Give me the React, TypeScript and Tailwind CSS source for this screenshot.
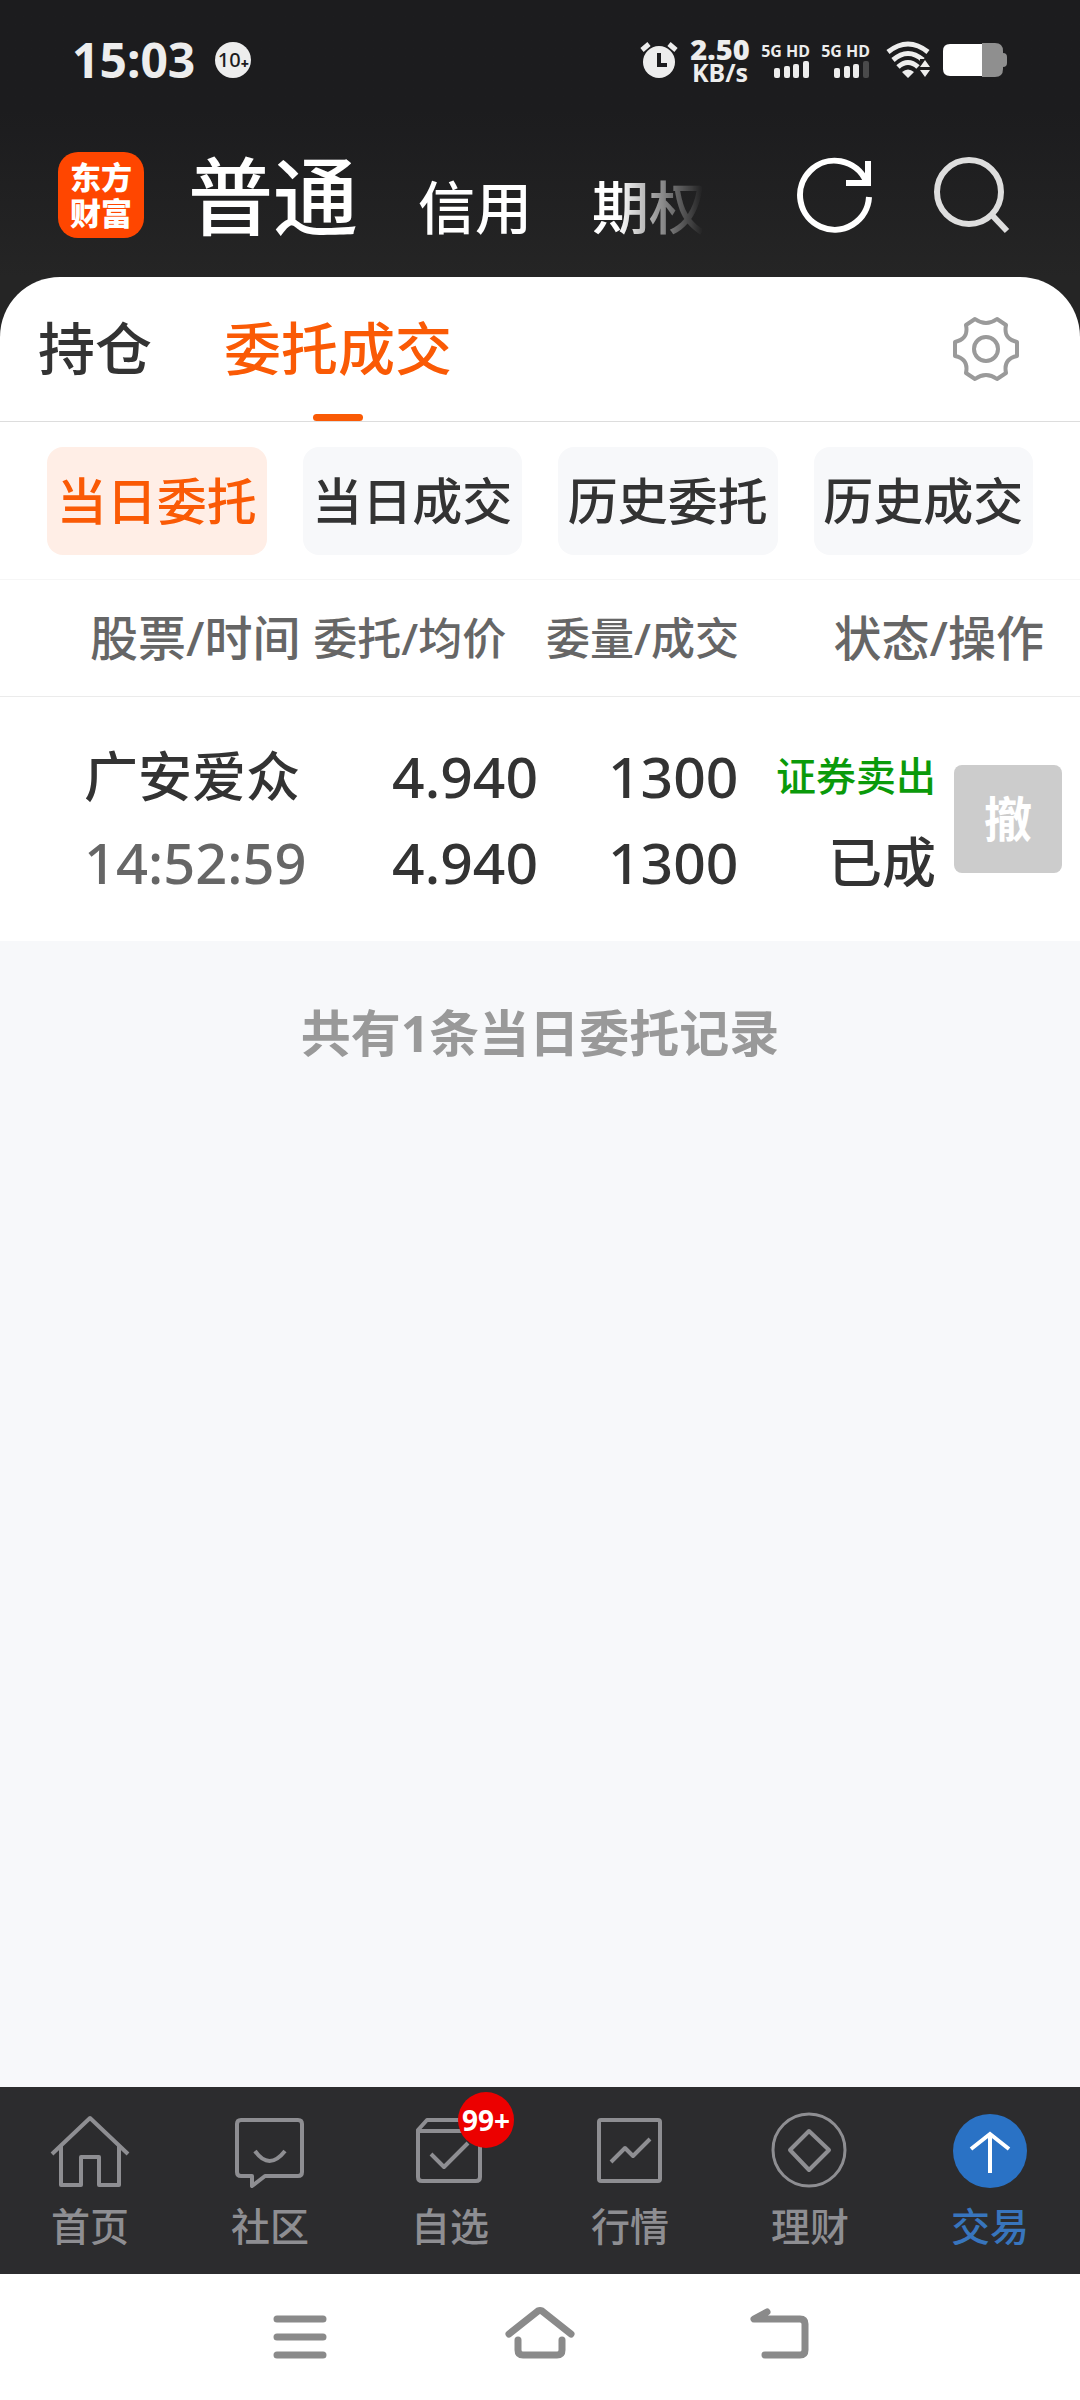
import React from "react";

const CJK = "font-['Noto_Sans','Noto_Sans_CJK_SC',sans-serif]";

function StatusBar() {
  return (
    <div className="flex h-30 items-center px-18 text-[#ededed]">
      <span className="text-5xl leading-none font-bold">15:03</span>
      <span className="ml-5 flex h-9 w-9 items-center justify-center rounded-full bg-[#ededed] text-xl leading-none font-medium text-[#1c1c1e]">
        10
        <span className="mt-2 text-sm leading-none font-black">+</span>
      </span>
      <div className="ml-auto flex items-center">
        <svg width="38" height="38" viewBox="0 0 38 38" aria-label="闹钟">
          <circle cx="19" cy="21" r="16" fill="#ededed" />
          <path d="M2 9 9 3M29 3l7 6" stroke="#ededed" strokeWidth="5" />
          <path d="M19 12v12h8" stroke="#1c1c1e" strokeWidth="4" fill="none" />
        </svg>
        <span className="ml-3 w-15 text-center text-[25px] leading-[22px] font-bold">
          <b className="text-[29px]">2.50</b>
          <br />
          KB/s
        </span>
        <Signal last="#ededed" />
        <Signal last="#4a4a4b" />
        <svg className="ml-4" width="44" height="38" viewBox="0 0 44 38" aria-label="无线网络">
          <g fill="none" stroke="#ededed" strokeWidth="5">
            <path d="M2 11Q22-5 42 11" />
            <path d="M7 19Q22 6 37 19" />
            <path d="M12 26Q22 17 32 26" />
          </g>
          <path d="M34 18h10v20H34z" fill="#1c1c1e" />
          <path d="M16 31q6-5 12 0l-6 6zM39 19l5 7H34zM34 29h10l-5 7z" fill="#ededed" />
        </svg>
        <svg className="ml-3" width="66" height="34" viewBox="0 0 66 34" aria-label="电量">
          <path d="M40 0h13q8 0 8 8v2q4 0 4 4v6q0 4-4 4v2q0 8-8 8H40z" fill="#8f8f8f" />
          <path d="M40 1v32H8q-7 0-7-7V8q0-7 7-7z" fill="#fff" />
        </svg>
      </div>
    </div>
  );
}

function Signal({ last }: { last: string }) {
  return (
    <div className="ml-3 flex w-12 flex-col items-end">
      <span className="text-base leading-4 font-bold whitespace-nowrap">5G HD</span>
      <svg className="mt-0.5" width="36" height="17" viewBox="0 0 36 17">
        <rect x="0" y="7" width="6" height="10" rx="2" fill="#ededed" />
        <rect x="10" y="5" width="6" height="12" rx="2" fill="#ededed" />
        <rect x="19" y="3" width="6" height="14" rx="2" fill="#ededed" />
        <rect x="29" y="0" width="6" height="17" rx="2" fill={last} />
      </svg>
    </div>
  );
}

function Header() {
  return (
    <header className="flex h-[157px] items-start pl-[58px] text-white">
      <div className="mt-8 flex h-[86px] w-[86px] items-center justify-center rounded-[20px] bg-[#ff4600] text-center text-[31px] leading-9 font-black">
        <span>
          东方
          <br />
          财富
        </span>
      </div>
      <nav className="ml-11 flex h-full flex-1 items-baseline gap-15 overflow-hidden mask-[linear-gradient(to_right,#000_430px,transparent_515px)] pt-5 font-medium whitespace-nowrap">
        <button className="text-[85px] leading-28">普通</button>
        <button className="text-[57px]">信用</button>
        <button className="text-[57px]">期权</button>
      </nav>
      <button className="mt-9" aria-label="刷新">
        <svg width="80" height="80" viewBox="0 0 80 80" fill="none" stroke="#fff" strokeWidth="6">
          <path d="M73 41A34.5 34.5 0 1 1 70 25" />
          <path d="M50 27h22V5" />
        </svg>
      </button>
      <button className="mt-9 mr-17 ml-14" aria-label="搜索">
        <svg width="80" height="80" viewBox="0 0 80 80" fill="none" stroke="#dedede" strokeWidth="6">
          <circle cx="37" cy="36" r="32" />
          <path d="M59 58 75 75" />
        </svg>
      </button>
    </header>
  );
}

function Tabs() {
  return (
    <div className="flex h-[145px] border-b border-[#dddddd] pl-[38px] text-[57px] font-medium">
      <button className="flex h-full items-center text-[#333]">持仓</button>
      <button className="relative ml-18 flex h-full items-center text-[#fa5a05]">
        委托成交
        <span className="absolute bottom-0 left-1/2 h-[7px] w-[50px] -translate-x-1/2 rounded-full bg-[#fa5a05]" />
      </button>
      <button className="mr-14 ml-auto" aria-label="设置">
        <svg width="76" height="76" viewBox="-38 -38 76 76" fill="none" stroke="#9a9a9a" strokeWidth="4" strokeLinejoin="round">
          <circle r="12" />
          <path d="M-11-30Q0-22 11-30L20-24C18-14 22-9 31-7V7C22 9 18 14 20 24L11 30Q0 22-11 30L-20 24C-18 14-22 9-31 7V-7C-22-9-18-14-20-24Z" />
        </svg>
      </button>
    </div>
  );
}

const filters = ["当日委托", "当日成交", "历史委托", "历史成交"];

function Filters() {
  return (
    <div className="grid grid-cols-4 gap-9 border-b border-[#f6f6f6] px-[47px] pt-[25px] pb-6">
      {filters.map((name, i) => (
        <button
          key={name}
          className={
            i === 0
              ? "h-27 rounded-2xl bg-[#ffeee6] text-[50px] font-medium whitespace-nowrap text-[#fa5a05]"
              : "h-27 rounded-2xl bg-[#f7f8fa] text-[50px] font-medium whitespace-nowrap text-[#333]"
          }
        >
          {name}
        </button>
      ))}
    </div>
  );
}

function Orders() {
  return (
    <table className="w-full table-fixed bg-white font-medium whitespace-nowrap">
      <colgroup>
        <col className="w-[29%]" />
        <col className="w-[21%]" />
        <col className="w-[18%]" />
        <col />
        <col className="w-[136px]" />
      </colgroup>
      <thead className="border-b border-[#ebebeb] text-[#666]">
        <tr className="h-29">
          <th className="pl-[90px] text-left text-[48px] font-medium">股票/时间</th>
          <th className="text-left text-[44px] font-medium">委托/均价</th>
          <th className="text-left text-[44px] font-medium">
            <span className="pl-1.5">委量/成交</span>
          </th>
          <th colSpan={2} className="pr-9 text-right text-[48px] font-medium">
            状态/操作
          </th>
        </tr>
      </thead>
      <tbody className="text-[#333]">
        <tr className="h-[245px]">
          <td className="pl-21">
            <div className="text-[54px] leading-[86px]">广安爱众</div>
            <div className="text-[56px] leading-[86px] text-[#666]">14:52:59</div>
          </td>
          <td className="pr-0.5 text-right text-[57px] leading-[86px]">
            <div>4.940</div>
            <div>4.940</div>
          </td>
          <td className="text-right text-[57px] leading-[86px]">
            <div className="-mr-1">1300</div>
            <div className="-mr-1">1300</div>
          </td>
          <td className="pr-2 text-right">
            <div className="text-[40px] leading-[86px] text-[#0a9a0a]">证券卖出</div>
            <div className="text-[54px] leading-[86px]">已成</div>
          </td>
          <td>
            <button className="ml-2.5 h-27 w-27 rounded-lg bg-[#ccc] text-5xl font-bold text-white">撤</button>
          </td>
        </tr>
      </tbody>
    </table>
  );
}

function NavIcon({ children }: { children: React.ReactNode }) {
  return (
    <svg width="80" height="80" viewBox="0 0 80 80" fill="none" stroke="currentColor" strokeWidth="4" strokeLinejoin="round">
      {children}
    </svg>
  );
}

const items = [
  {
    name: "首页",
    icon: <path d="M2 44 40 8 78 44M11 36v39h20V47h18v28h20V36" />,
  },
  {
    name: "社区",
    icon: (
      <>
        <path d="M11 10h57q4 0 4 4v48q0 4-4 4H35L22 76V66H11q-4 0-4-4V14q0-4 4-4z" />
        <path d="M25 41q14 20 30 0" />
      </>
    ),
  },
  {
    name: "自选",
    icon: (
      <>
        <path d="M8 20 17 10h44l9 10v47q0 4-4 4H12q-4 0-4-4zM8 21h62" />
        <path d="m21 44 13 13 24-24" />
      </>
    ),
  },
  {
    name: "行情",
    icon: (
      <>
        <rect x="9" y="10" width="61" height="61" rx="2" />
        <path d="m21 52 14-14 8 8 17-17" />
      </>
    ),
  },
  {
    name: "理财",
    icon: (
      <>
        <circle cx="39" cy="40" r="36" strokeWidth="3" />
        <path d="m39 21 20 19-20 20-19-20z" />
      </>
    ),
  },
  {
    name: "交易",
    icon: (
      <>
        <circle cx="40" cy="41" r="37" fill="#2a72c5" stroke="none" />
        <path d="M40 63V23M21 39l19-15 19 15" stroke="#fff" strokeLinejoin="miter" />
      </>
    ),
  },
];

function BottomNav() {
  return (
    <nav className="grid h-[187px] grid-cols-6 bg-[#2c2c2e] font-medium">
      {items.map((item) => (
        <a
          key={item.name}
          href="#"
          className={
            item.name === "交易"
              ? "flex flex-col items-center pt-[23px] text-[#3875bd]"
              : "flex flex-col items-center pt-[23px] text-[#8e8e92]"
          }
        >
          <span className="relative">
            <NavIcon>{item.icon}</NavIcon>
            {item.name === "自选" && (
              <span className="absolute -top-4.5 -right-6 flex h-14 w-14 items-center justify-center rounded-full bg-[#ec0000] text-[28px] leading-none font-bold text-white">
                99+
              </span>
            )}
          </span>
          <span className="mt-3 text-[39px] leading-12">{item.name}</span>
        </a>
      ))}
    </nav>
  );
}

function SystemNav() {
  return (
    <div className="flex h-[126px] items-center justify-center gap-40 bg-white">
      <button aria-label="最近任务">
        <svg width="80" height="64" viewBox="0 0 80 64" stroke="#8a8a8a" strokeWidth="7" strokeLinecap="round">
          <path d="M17 14h46M17 32h46M17 50h46" />
        </svg>
      </button>
      <button aria-label="主屏幕">
        <svg width="80" height="64" viewBox="0 0 80 64" fill="none" stroke="#8a8a8a" strokeWidth="7" strokeLinecap="round" strokeLinejoin="round">
          <path d="M9 29 38 6q2-1 4 0L71 29M18 35v10q0 5 5 5h34q5 0 5-5V35" />
        </svg>
      </button>
      <button aria-label="返回">
        <svg width="80" height="64" viewBox="0 0 80 64" fill="none" stroke="#8a8a8a" strokeWidth="7" strokeLinecap="round" strokeLinejoin="round">
          <path d="M27 7 14 14h46q5 0 5 5v26q0 5-5 5H25" />
        </svg>
      </button>
    </div>
  );
}

export default function App() {
  return (
    <div className={`${CJK} flex min-h-screen flex-col bg-[#f7f8fa]`}>
      <div className="bg-linear-to-b from-[#1c1c1e] from-40% to-[#252525]">
        <StatusBar />
        <Header />
      </div>
      <div className="bg-[#252525]">
        <div className="rounded-t-[60px] bg-white">
          <Tabs />
          <Filters />
        </div>
      </div>
      <Orders />
      <p className="mt-13 flex-1 text-center text-[50px] leading-20 font-bold text-[#999]">共有1条当日委托记录</p>
      <BottomNav />
      <SystemNav />
    </div>
  );
}
